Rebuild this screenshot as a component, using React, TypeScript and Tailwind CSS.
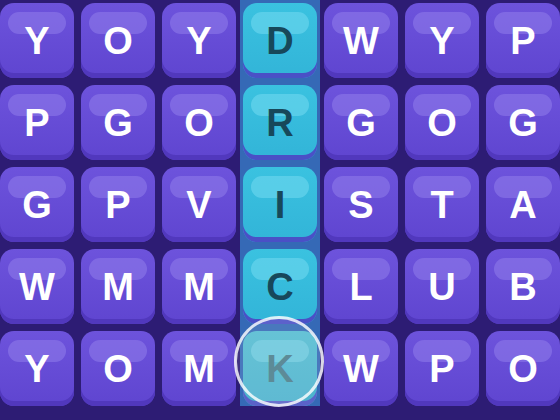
import React from "react";

const rows = [
  ["Y", "O", "Y", "D", "W", "Y", "P"],
  ["P", "G", "O", "R", "G", "O", "G"],
  ["G", "P", "V", "I", "S", "T", "A"],
  ["W", "M", "M", "C", "L", "U", "B"],
  ["Y", "O", "M", "K", "W", "P", "O"],
];

const font = { fontFamily: '"Liberation Sans", Arial, sans-serif' };

function Tile({ letter, kind }: { letter: string; kind: "purple" | "cyan" | "faded" }) {
  if (kind === "purple") {
    return (
      <div className="relative h-[75px] w-[74px] rounded-[14px] bg-gradient-to-b from-[#6d53dc] to-[#5f45d0] shadow-[inset_0_-5px_0_#5138bd] flex items-center justify-center">
        <div className="absolute top-[9px] left-[8px] right-[8px] h-[22px] rounded-full bg-[#8e79ea]/60" />
        <span className="relative text-[38px] font-bold text-white leading-none pt-[1px]" style={font}>
          {letter}
        </span>
      </div>
    );
  }
  if (kind === "cyan") {
    return (
      <div className="relative h-[75px] w-[74px] rounded-[14px] bg-gradient-to-b from-[#3ac2e0] to-[#32b4d8] shadow-[inset_0_-5px_0_#4a50c6] flex items-center justify-center">
        <div className="absolute top-[9px] left-[8px] right-[8px] h-[22px] rounded-full bg-[#66d4ec]/70" />
        <span className="relative text-[38px] font-bold text-[#17485a] leading-none pt-[1px]" style={font}>
          {letter}
        </span>
      </div>
    );
  }
  return (
    <div className="relative h-[75px] w-[74px]">
      <div className="relative h-[75px] w-[74px] rounded-[14px] bg-gradient-to-b from-[#55bcd2] to-[#4cb2cd] shadow-[inset_0_-5px_0_#5a62c8] flex items-center justify-center">
        <div className="absolute top-[9px] left-[8px] right-[8px] h-[22px] rounded-full bg-[#7bd2e4]/60" />
        <span className="relative text-[38px] font-bold text-[#4b7e8c] leading-none pt-[1px]" style={font}>
          {letter}
        </span>
      </div>
      <div className="absolute left-[-9px] top-[-15px] h-[91px] w-[90px] rounded-full border-[3px] border-white/80 bg-white/10" />
    </div>
  );
}

export default function App() {
  const cols = [0, 1, 2, 3, 4, 5, 6];
  return (
    <div className="w-[560px] h-[420px] overflow-hidden bg-[#2d1c74] flex gap-[7px]">
      {cols.map((c) => (
        <div
          key={c}
          className={
            c === 3
              ? "flex flex-col gap-[7px] pt-[3px] mx-[-3px] px-[3px] bg-[#3569b6] self-start"
              : "flex flex-col gap-[7px] pt-[3px]"
          }
        >
          {rows.map((r, i) => (
            <Tile key={i} letter={r[c]} kind={c === 3 ? (i === 4 ? "faded" : "cyan") : "purple"} />
          ))}
        </div>
      ))}
    </div>
  );
}
